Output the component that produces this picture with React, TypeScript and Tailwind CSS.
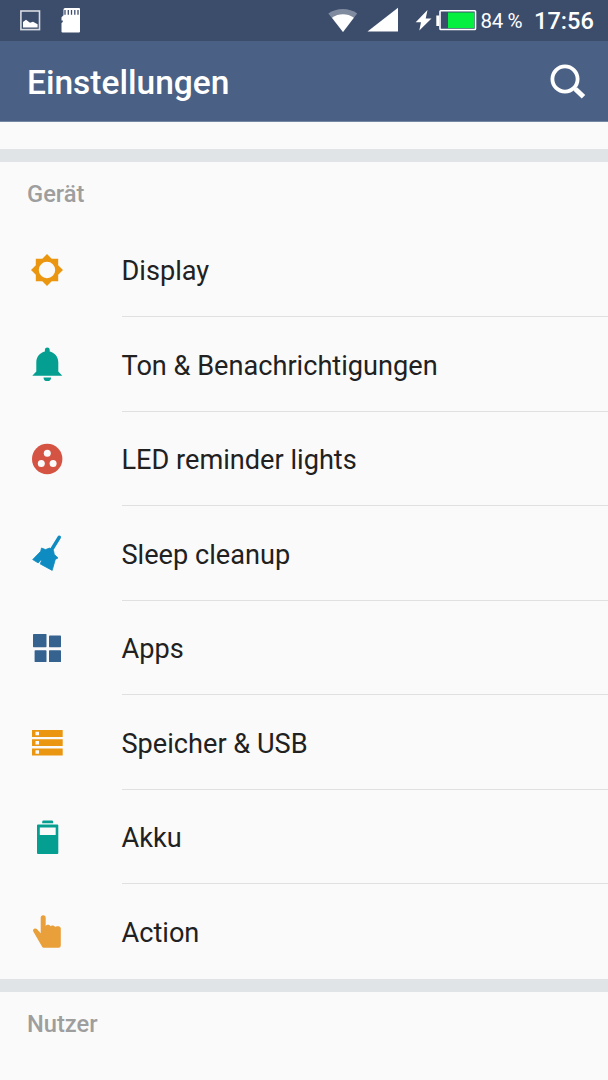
import type { ReactNode } from "react";

const items: { label: string; color: string; icon: ReactNode }[] = [
  {
    label: "Display",
    color: "text-[#eb9610]",
    icon: (
      <path fillRule="evenodd" d="M20 4l4.7 4.8h6.5v6.5L36 20l-4.8 4.7v6.5h-6.5L20 36l-4.7-4.8H8.8v-6.5L4 20l4.8-4.7V8.8h6.5zM20 11.8a8.2 8.2 0 1 0 0 16.4a8.2 8.2 0 1 0 0-16.4z" />
    ),
  },
  {
    label: "Ton & Benachrichtigungen",
    color: "text-[#049f90]",
    icon: (
      <path d="M17.9 7.6V5.800a2.400 2.400 0 0 1 4.800 0V7.600c5 1.200 8.600 5.400 8.600 10.700V27.600l4 4.200h-30l4-4.200v-9.300C9.300 13 12.900 8.800 17.900 7.600zM16.500 33.400h7.600a3.800 3.600 0 0 1-7.600 0z" />
    ),
  },
  {
    label: "LED reminder lights",
    color: "text-[#d55342]",
    icon: (
      <>
        <circle cx="20.200" cy="20" r="15.200" />
        <g fill="#fafafa">
          <circle cx="20.300" cy="14.250" r="3.500" />
          <circle cx="14.300" cy="24.600" r="3.500" />
          <circle cx="26.100" cy="24.600" r="3.500" />
        </g>
      </>
    ),
  },
  {
    label: "Sleep cleanup",
    color: "text-[#0e8cc1]",
    icon: (
      <g transform="translate(0 0.400)">
        <path d="M32.200 4L24.500 16.500" stroke="currentColor" strokeWidth="3.600" strokeLinecap="round" />
        <path d="M14.500 14.600L18.500 16.200L22.500 14.700L26.500 17.200L27.300 21L31 24.500L28.300 26L25.200 37L13.200 30.500L14.700 26.800L13.500 26.800L11.200 29.500L5.700 26.200L13.700 17.900z" stroke="currentColor" strokeWidth="0.800" strokeLinejoin="round" />
      </g>
    ),
  },
  {
    label: "Apps",
    color: "text-[#35628f]",
    icon: (
      <>
        <rect x="6" y="5.900" width="13.500" height="13.400" rx="0.700" />
        <rect x="22" y="7.500" width="12" height="11.800" rx="0.700" />
        <rect x="7.600" y="22.200" width="11.900" height="11.900" rx="0.700" />
        <rect x="22" y="22.200" width="12" height="11.900" rx="0.700" />
      </>
    ),
  },
  {
    label: "Speicher & USB",
    color: "text-[#eb9610]",
    icon: (
      <path transform="translate(0 0.400)" fillRule="evenodd" d="M5 7.600h30.700v6.900H5zM8.500 9.300v3.500H12V9.300zM5 16.800h30.700v6.900H5zM8.500 18.500v3.500H12v-3.500zM5 26.100h30.700V33H5zM8.500 27.800v3.500H12v-3.500z" />
    ),
  },
  {
    label: "Akku",
    color: "text-[#049f90]",
    icon: (
      <path fillRule="evenodd" d="M15.200 6.200V4.800a1.400 1.400 0 0 1 1.400-1.400h8.200a1.400 1.400 0 0 1 1.400 1.400v1.400zM11 7.600h19.300a1 1 0 0 1 1 1V36a1 1 0 0 1-1 1H11a1 1 0 0 1-1-1V8.600a1 1 0 0 1 1-1zM12.800 10.600V18h15.900v-7.400z" />
    ),
  },
  {
    label: "Action",
    color: "text-[#e9a03b]",
    icon: (
      <path transform="translate(0 0.400)" d="M13.700 6.300a2.500 2.500 0 0 1 5 0v8.300c.8-1.600 3.900-1.600 4.800.2c.9-1 3.600-1 4.600.8c1-1.200 5.700-1.200 5.700 1.400v17.200a2.200 2.200 0 0 1-2.200 2.200H17c-1 0-1.600-.5-2-1.300L6.300 20.200c-.8-1.600.3-3 1.700-3.100c1-.1 1.800.3 2.500 1.200l3.200 3.500z" />
    ),
  },
];

function StatusBar() {
  return (
    <div className="flex h-[41px] shrink-0 items-center bg-[#3c4d6c] text-white">
      <svg className="h-[41px] w-[90px]" viewBox="0 0 90 41" fill="currentColor">
        <rect x="20.900" y="11" width="18.600" height="18.600" fill="none" stroke="#d8dbe1" strokeWidth="1.600" />
        <path d="M23 27.500v-5.500l3-2.200l4 3l3-1l4.600 2.500v3.200z" />
        <path d="M65 8h14a1 1 0 0 1 1 1v22.500a1 1 0 0 1-1 1H62.500a1 1 0 0 1-1-1V23l1.300-1v-1.500h-1.300v-3.200l2-2V9.500A1.500 1.500 0 0 1 65 8z" />
        <path d="M65 10v4.800M68.300 10v4.800M71.500 10v4.800M74.800 10v4.800M78 10v4.800" stroke="#3c4d6c" strokeWidth="1.300" />
      </svg>
      <svg className="ml-auto h-[41px] w-[153px]" viewBox="325 0 153 41" fill="currentColor">
        <path opacity="0.350" d="M328.300 13.400C336.500 7.400 349.500 7.400 357.200 13.400L343 32z" />
        <path d="M332 17.800C338.500 13.200 347.500 13.200 353.800 17.800L343 32z" />
        <path d="M367.500 31.500L398 7.700V31.500z" />
        <path d="M427.500 10l-11.800 12.200h5.300l-1.700 8.300L431.500 18.500h-5.800z" />
        <path d="M436.300 15.500h3v10.500h-3z" />
        <rect x="440" y="10.800" width="35.500" height="18.700" rx="0.800" fill="none" stroke="white" strokeWidth="1.600" />
        <rect x="448" y="12.500" width="26.300" height="15.600" fill="#05ef40" />
      </svg>
      <span className="w-[56px] whitespace-pre pl-[2.500px] pt-[2px] text-[20.500px] leading-none tracking-[-0.350px]">84 %</span>
      <span className="w-[74px] pt-[2px] text-[23.600px] font-medium leading-none">17:56</span>
    </div>
  );
}

export default function App() {
  return (
    <div className="flex h-[1080px] w-[608px] flex-col overflow-hidden bg-[#fafafa] font-['Roboto',sans-serif] text-[#212121]">
      <StatusBar />
      <header className="flex h-[81px] shrink-0 items-center justify-between border-b border-[#7587a3] bg-[#4a6185] pl-[27px] pr-[19px] text-white">
        <h1 className="pt-[3px] text-[33.500px] font-medium leading-none">Einstellungen</h1>
        <svg className="h-[40px] w-[40px]" viewBox="0 0 40 40" fill="none" stroke="currentColor" strokeWidth="3.800">
          <circle cx="16" cy="18" r="12.600" />
          <path d="M25 26.800L26.500 28.200" strokeWidth="3" />
          <path d="M26.300 28L34.500 35.800" strokeWidth="5" />
        </svg>
      </header>
      <div className="h-[27px] shrink-0" />
      <div className="h-[13px] shrink-0 bg-[#e1e4e7]" />
      <main className="flex flex-col">
        <h2 className="h-[60.500px] pl-[27px] pt-[19px] text-[23.700px] font-medium leading-[26px] text-[#9e9e9e]">Gerät</h2>
        <ul className="flex flex-col">
          {items.map((item, i) => (
            <li key={item.label} className="flex h-[94.500px] items-center pl-[27px]">
              <svg className={`h-[40px] w-[40px] shrink-0 ${item.color}`} viewBox="0 0 40 40" fill="currentColor">
                {item.icon}
              </svg>
              <div
                className={`ml-[54.500px] flex h-full flex-1 items-center border-b pt-[5px] text-[27.150px] leading-none ${
                  i < items.length - 1 ? "border-[#e0e0e0]" : "border-transparent"
                }`}
              >
                {item.label}
              </div>
            </li>
          ))}
        </ul>
      </main>
      <div className="h-[13.500px] shrink-0 bg-[#e1e4e7]" />
      <h2 className="pl-[27px] pt-[19px] text-[23.700px] font-medium leading-[26px] text-[#9e9e9e]">Nutzer</h2>
    </div>
  );
}
